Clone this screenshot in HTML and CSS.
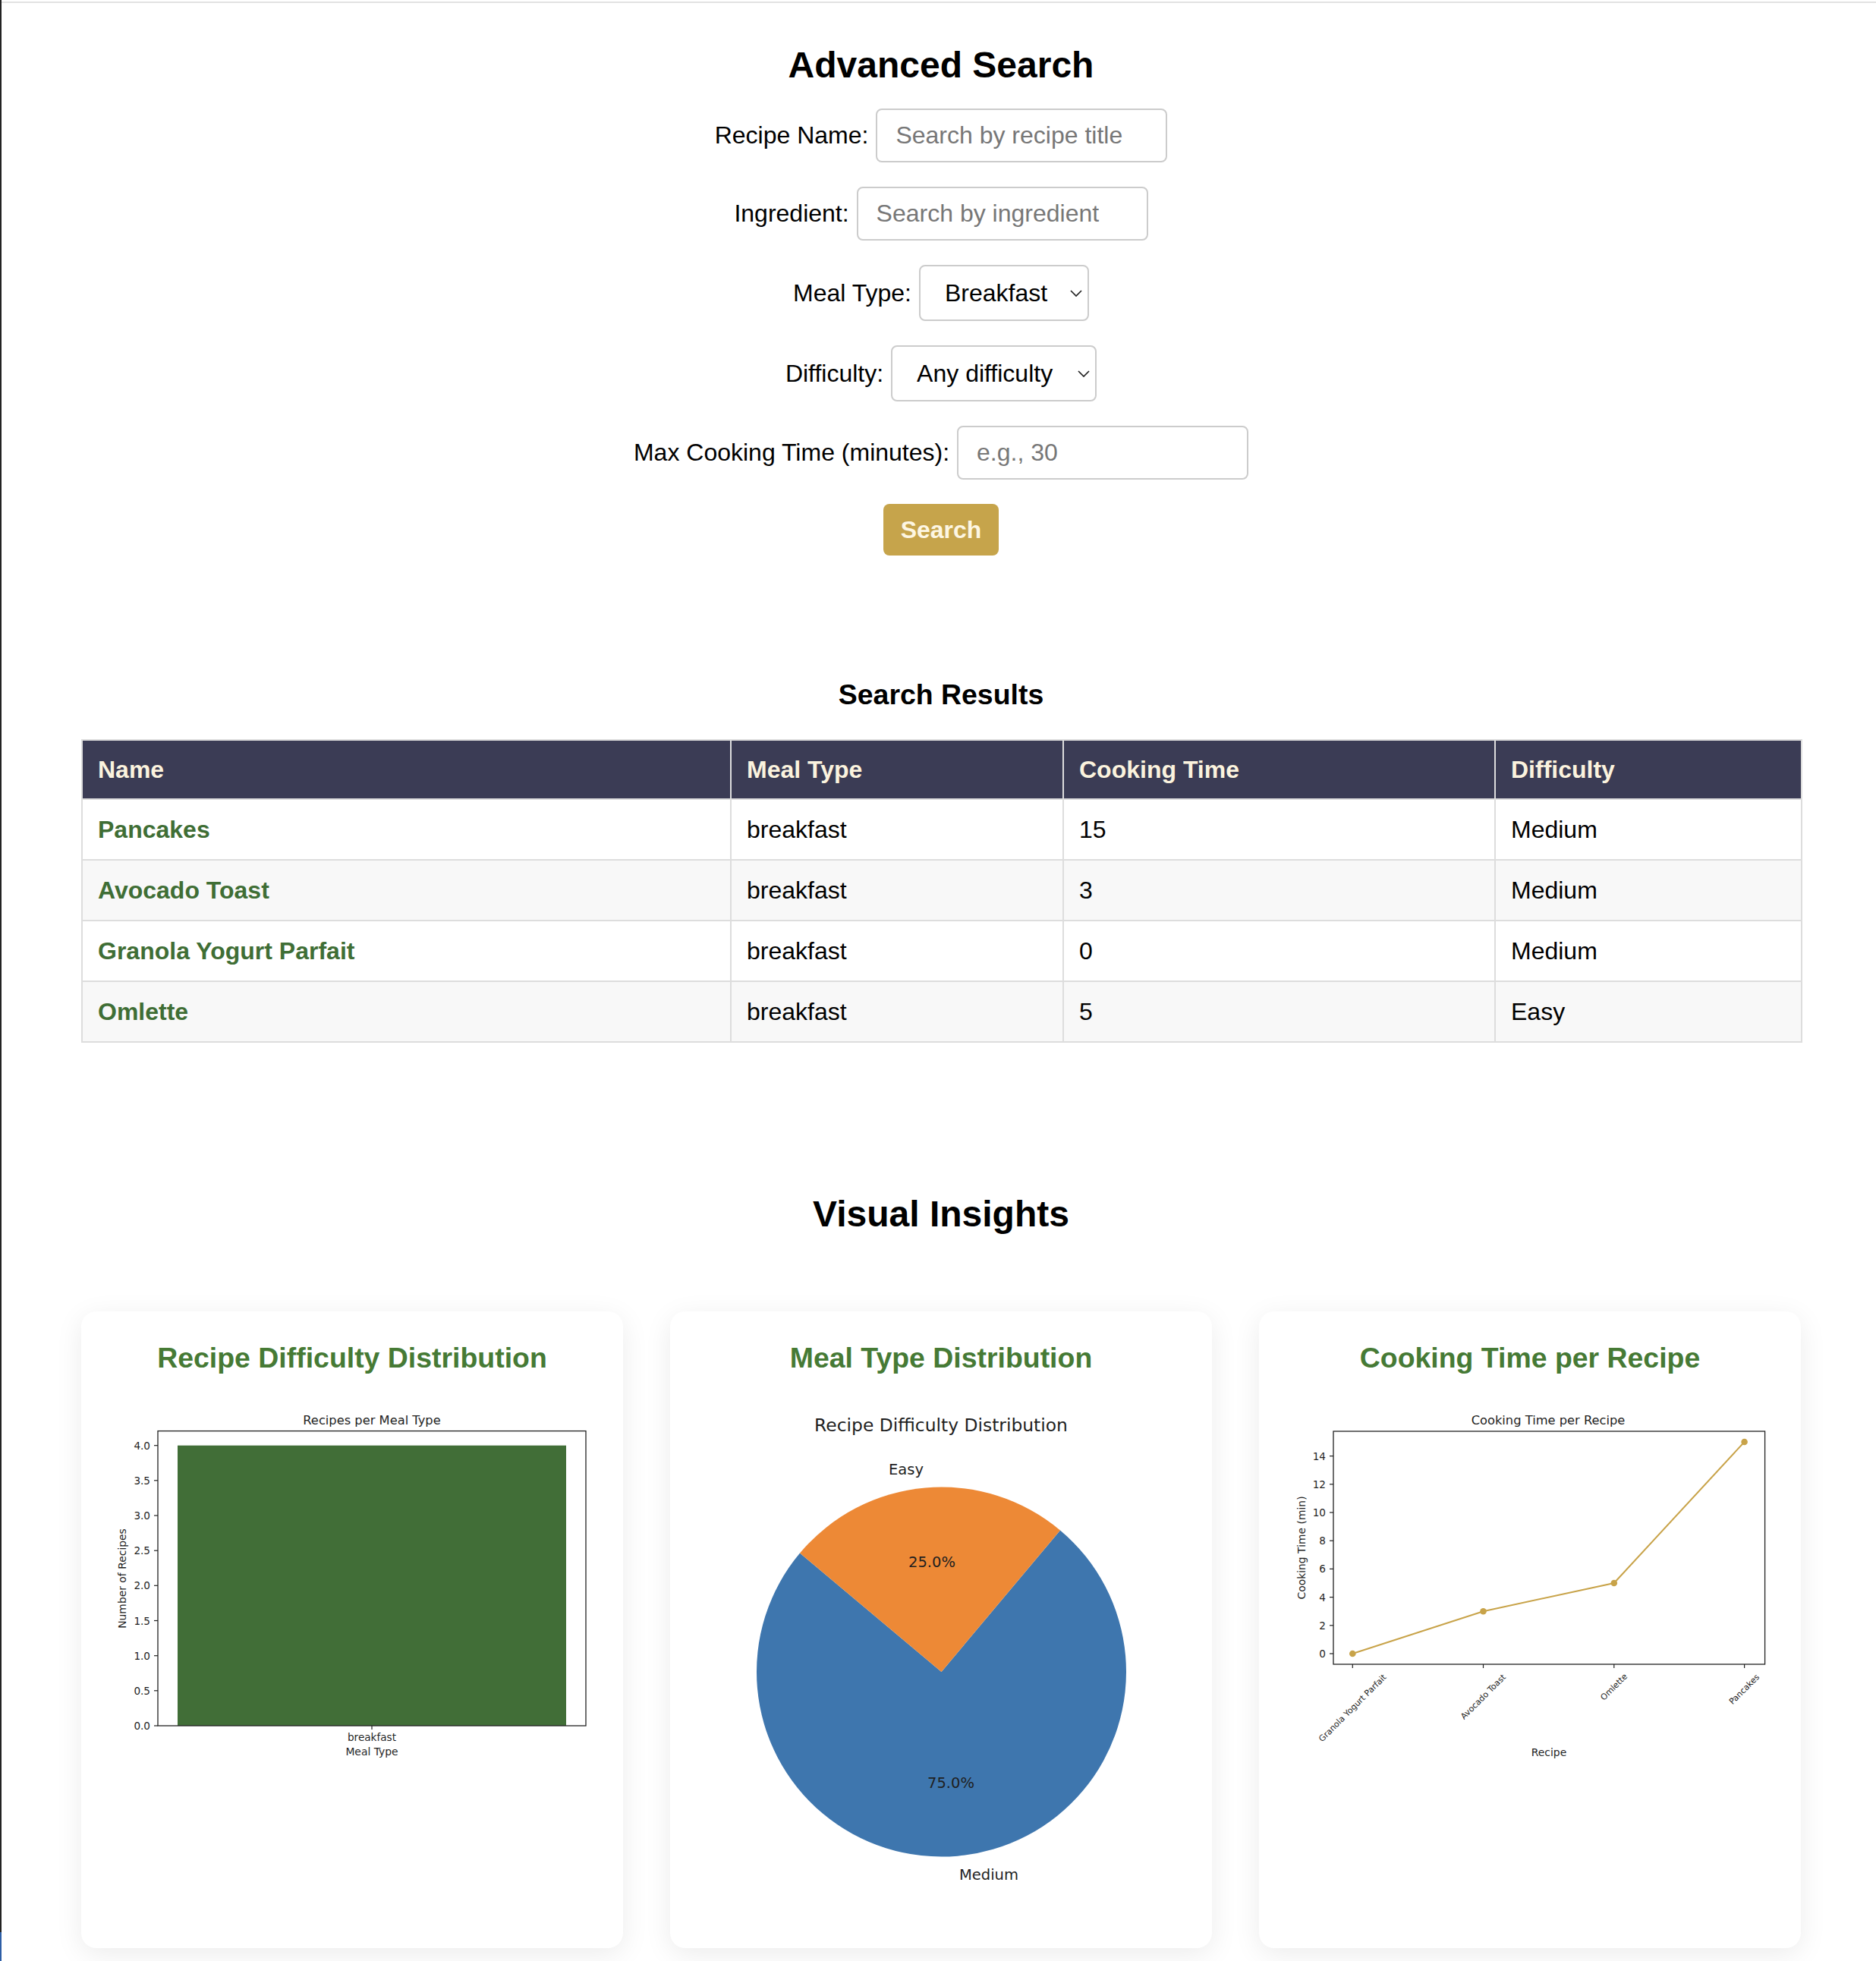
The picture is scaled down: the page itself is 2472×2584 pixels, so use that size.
FILE: index.html
```html
<!DOCTYPE html>
<html lang="en">
<head>
<meta charset="utf-8">
<title>Advanced Search</title>
<link rel="stylesheet" href="styles.css">
</head>
<body>
<div class="window">
  <div class="window-edge"></div>
  <div class="content">
    <main class="page">
      <section class="search">
        <h2 class="page-title">Advanced Search</h2>
        <form class="search-form">
          <div class="form-row">
            <label class="form-label" for="recipe-name">Recipe Name:</label>
            <input id="recipe-name" class="text-input" type="text" placeholder="Search by recipe title">
          </div>
          <div class="form-row">
            <label class="form-label" for="ingredient">Ingredient:</label>
            <input id="ingredient" class="text-input" type="text" placeholder="Search by ingredient">
          </div>
          <div class="form-row">
            <label class="form-label" for="meal-type">Meal Type:</label>
            <div class="select-wrap">
              <select id="meal-type" class="select select-meal">
                <option>Any</option>
                <option selected>Breakfast</option>
                <option>Lunch</option>
                <option>Dinner</option>
                <option>Snack</option>
              </select>
              <svg class="chevron" viewBox="0 0 16 9" width="16" height="9"><path d="M1 1 L8 8 L15 1" fill="none" stroke="#222" stroke-width="1.7"/></svg>
            </div>
          </div>
          <div class="form-row">
            <label class="form-label" for="difficulty">Difficulty:</label>
            <div class="select-wrap">
              <select id="difficulty" class="select select-difficulty">
                <option selected>Any difficulty</option>
                <option>Easy</option>
                <option>Medium</option>
                <option>Hard</option>
              </select>
              <svg class="chevron" viewBox="0 0 16 9" width="16" height="9"><path d="M1 1 L8 8 L15 1" fill="none" stroke="#222" stroke-width="1.7"/></svg>
            </div>
          </div>
          <div class="form-row">
            <label class="form-label" for="max-time">Max Cooking Time (minutes):</label>
            <input id="max-time" class="text-input" type="text" placeholder="e.g., 30">
          </div>
          <button class="search-btn" type="button">Search</button>
        </form>
      </section>

      <section class="results">
        <h3 class="results-title">Search Results</h3>
        <table class="results-table">
          <thead>
            <tr>
              <th class="col-name">Name</th>
              <th class="col-meal">Meal Type</th>
              <th class="col-time">Cooking Time</th>
              <th class="col-diff">Difficulty</th>
            </tr>
          </thead>
          <tbody>
            <tr><td><a class="recipe-link" href="#">Pancakes</a></td><td>breakfast</td><td>15</td><td>Medium</td></tr>
            <tr><td><a class="recipe-link" href="#">Avocado Toast</a></td><td>breakfast</td><td>3</td><td>Medium</td></tr>
            <tr><td><a class="recipe-link" href="#">Granola Yogurt Parfait</a></td><td>breakfast</td><td>0</td><td>Medium</td></tr>
            <tr><td><a class="recipe-link" href="#">Omlette</a></td><td>breakfast</td><td>5</td><td>Easy</td></tr>
          </tbody>
        </table>
      </section>

      <section class="insights">
        <h2 class="insights-title">Visual Insights</h2>
        <div class="chart-grid">
          <div class="chart-card">
            <h3 class="chart-title">Recipe Difficulty Distribution</h3>
            <svg class="chart" viewBox="0 0 634 480" width="634" height="480">
              <text class="c-title" x="343" y="20">Recipes per Meal Type</text>
              <rect x="87" y="53.7" width="512" height="369.3" fill="#416e37"/>
              <rect x="61" y="34.6" width="564" height="388.4" fill="none" stroke="#222" stroke-width="1.3"/>
              <g stroke="#222" stroke-width="1.2">
                <line x1="56" y1="423" x2="61" y2="423"/>
                <line x1="56" y1="376.8" x2="61" y2="376.8"/>
                <line x1="56" y1="330.7" x2="61" y2="330.7"/>
                <line x1="56" y1="284.5" x2="61" y2="284.5"/>
                <line x1="56" y1="238.3" x2="61" y2="238.3"/>
                <line x1="56" y1="192.2" x2="61" y2="192.2"/>
                <line x1="56" y1="146" x2="61" y2="146"/>
                <line x1="56" y1="99.8" x2="61" y2="99.8"/>
                <line x1="56" y1="53.7" x2="61" y2="53.7"/>
                <line x1="343" y1="423" x2="343" y2="428"/>
              </g>
              <g class="c-tick c-end">
                <text x="51" y="423">0.0</text>
                <text x="51" y="376.8">0.5</text>
                <text x="51" y="330.7">1.0</text>
                <text x="51" y="284.5">1.5</text>
                <text x="51" y="238.3">2.0</text>
                <text x="51" y="192.2">2.5</text>
                <text x="51" y="146">3.0</text>
                <text x="51" y="99.8">3.5</text>
                <text x="51" y="53.7">4.0</text>
              </g>
              <text class="c-tick" x="343" y="438">breakfast</text>
              <text class="c-label" x="343" y="457">Meal Type</text>
              <text class="c-label" transform="translate(13.5 229) rotate(-90)">Number of Recipes</text>
            </svg>
          </div>

          <div class="chart-card">
            <h3 class="chart-title">Meal Type Distribution</h3>
            <svg class="chart" viewBox="0 0 634 650" width="634" height="650">
              <text class="c-title c-title-lg" x="317" y="27">Recipe Difficulty Distribution</text>
              <path d="M317.5 352 L131 195.5 A243.5 243.5 0 1 0 474 165.5 Z" fill="#3e76ae"/>
              <path d="M317.5 352 L474 165.5 A243.5 243.5 0 0 0 131 195.5 Z" fill="#ed8936"/>
              <text class="c-pie c-end" x="294" y="85">Easy</text>
              <text class="c-pie c-start" x="341" y="619">Medium</text>
              <text class="c-pie" x="305" y="207">25.0%</text>
              <text class="c-pie" x="330" y="498">75.0%</text>
            </svg>
          </div>

          <div class="chart-card">
            <h3 class="chart-title">Cooking Time per Recipe</h3>
            <svg class="chart" viewBox="0 0 634 480" width="634" height="480">
              <text class="c-title" x="341" y="20">Cooking Time per Recipe</text>
              <rect x="58" y="35" width="568.6" height="307" fill="none" stroke="#222" stroke-width="1.3"/>
              <g stroke="#222" stroke-width="1.2">
                <line x1="53" y1="328" x2="58" y2="328"/>
                <line x1="53" y1="290.8" x2="58" y2="290.8"/>
                <line x1="53" y1="253.6" x2="58" y2="253.6"/>
                <line x1="53" y1="216.4" x2="58" y2="216.4"/>
                <line x1="53" y1="179.2" x2="58" y2="179.2"/>
                <line x1="53" y1="142" x2="58" y2="142"/>
                <line x1="53" y1="104.8" x2="58" y2="104.8"/>
                <line x1="53" y1="67.6" x2="58" y2="67.6"/>
                <line x1="83.3" y1="342" x2="83.3" y2="347"/>
                <line x1="255.5" y1="342" x2="255.5" y2="347"/>
                <line x1="427.8" y1="342" x2="427.8" y2="347"/>
                <line x1="599.6" y1="342" x2="599.6" y2="347"/>
              </g>
              <g class="c-tick c-end">
                <text x="48" y="328">0</text>
                <text x="48" y="290.8">2</text>
                <text x="48" y="253.6">4</text>
                <text x="48" y="216.4">6</text>
                <text x="48" y="179.2">8</text>
                <text x="48" y="142">10</text>
                <text x="48" y="104.8">12</text>
                <text x="48" y="67.6">14</text>
              </g>
              <polyline points="83.3,328 255.5,272.2 427.8,235 599.6,49" fill="none" stroke="#c8a349" stroke-width="2"/>
              <g fill="#c8a349">
                <circle cx="83.3" cy="328" r="4.3"/>
                <circle cx="255.5" cy="272.2" r="4.3"/>
                <circle cx="427.8" cy="235" r="4.3"/>
                <circle cx="599.6" cy="49" r="4.3"/>
              </g>
              <g class="c-rot">
                <text transform="translate(83.3 399.8) rotate(-45)">Granola Yogurt Parfait</text>
                <text transform="translate(255.5 385) rotate(-45)">Avocado Toast</text>
                <text transform="translate(427.8 372) rotate(-45)">Omlette</text>
                <text transform="translate(599.6 375) rotate(-45)">Pancakes</text>
              </g>
              <text class="c-label" x="342" y="457.5">Recipe</text>
              <text class="c-label" transform="translate(15.8 188.5) rotate(-90)">Cooking Time (min)</text>
            </svg>
          </div>
        </div>
      </section>
    </main>
  </div>
  <div class="window-corner"></div>
</div>
</body>
</html>
```

FILE: styles.css
```css
html, body {
  margin: 0;
  padding: 0;
  background: #ffffff;
}

body {
  font-family: "Liberation Sans", Arial, Helvetica, sans-serif;
  font-size: 32px;
  color: #000000;
}

.window {
  border-left: 2px solid #222222;
  padding-top: 2px;
  min-height: 2584px;
  box-sizing: border-box;
}

.window-edge {
  height: 2px;
  background: #e2e2e2;
}

.window-corner {
  position: fixed;
  left: 0;
  bottom: 0;
  width: 2px;
  height: 38px;
  background: #2d5ea6;
}

.content {
  padding-left: 6px;
}

.page {
  width: 2266px;
  margin: 0 auto;
}

/* ---------- search form ---------- */

.page-title {
  font-size: 48px;
  font-weight: bold;
  text-align: center;
  line-height: normal;
  margin: 54px 0 30px;
}

.search-form {
  margin: 0;
}

.form-row {
  display: flex;
  justify-content: center;
  align-items: center;
  gap: 10px;
  margin-bottom: 32px;
}

.form-label {
  font-size: 32px;
  line-height: normal;
}

.text-input {
  box-sizing: border-box;
  width: 384px;
  height: 71px;
  padding: 0 24px;
  border: 2px solid #cccccc;
  border-radius: 8px;
  font-family: inherit;
  font-size: 32px;
  color: #000000;
  background: #ffffff;
  outline: none;
}

.text-input::placeholder {
  color: #777777;
}

.select-wrap {
  position: relative;
  display: flex;
}

.select {
  appearance: none;
  -webkit-appearance: none;
  box-sizing: border-box;
  height: 74px;
  padding: 0 50px 0 32px;
  border: 2px solid #cccccc;
  border-radius: 8px;
  background: #ffffff;
  font-family: inherit;
  font-size: 32px;
  color: #000000;
  outline: none;
}

.select-meal {
  width: 224px;
}

.select-difficulty {
  width: 271px;
}

.chevron {
  position: absolute;
  right: 9px;
  top: 33px;
  pointer-events: none;
}

.search-btn {
  display: block;
  margin: 0 auto;
  width: 152px;
  height: 68px;
  padding: 0;
  border: none;
  border-radius: 8px;
  background: #c6a44b;
  color: #fdf6e2;
  font-family: inherit;
  font-size: 32px;
  font-weight: bold;
}

/* ---------- results ---------- */

.results-title {
  font-size: 37.44px;
  font-weight: bold;
  text-align: center;
  line-height: normal;
  margin: 162px 0 37px;
}

.results-table {
  width: 100%;
  border-collapse: collapse;
  table-layout: fixed;
  font-size: 32px;
}

.results-table th,
.results-table td {
  border: 2px solid #dddddd;
  padding: 20px;
  text-align: left;
}

.results-table th {
  background: #3b3c55;
  color: #fbf3de;
  font-weight: bold;
  line-height: 36px;
}

.results-table td {
  line-height: 38px;
}

.results-table tbody tr:nth-child(even) {
  background: #f8f8f8;
}

.col-name { width: 813px; }
.col-meal { width: 396px; }
.col-time { width: 527px; }
.col-diff { width: 362px; }

.recipe-link {
  color: #3f6e35;
  font-weight: bold;
  text-decoration: none;
}

/* ---------- insights ---------- */

.insights-title {
  font-size: 48px;
  font-weight: bold;
  text-align: center;
  line-height: normal;
  margin: 198px 0 101px;
}

.chart-grid {
  display: grid;
  grid-template-columns: repeat(3, 714px);
  gap: 62px;
}

.chart-card {
  box-sizing: border-box;
  min-height: 839px;
  padding: 40px;
  background: #ffffff;
  border-radius: 20px;
  box-shadow: 0 8px 36px rgba(0, 0, 0, 0.08);
  text-align: center;
}

.chart-title {
  margin: 0 0 40px;
  color: #467a35;
  font-size: 37.44px;
  font-weight: bold;
  line-height: normal;
}

.chart {
  display: block;
  overflow: visible;
}

.chart text {
  font-family: "DejaVu Sans", sans-serif;
  fill: #1f1f1f;
  text-anchor: middle;
  dominant-baseline: central;
}

.chart .c-title {
  font-size: 16.3px;
}

.chart .c-title-lg {
  font-size: 23.4px;
}

.chart .c-tick text,
.chart text.c-tick {
  font-size: 13.6px;
}

.chart .c-label {
  font-size: 13.9px;
}

.chart .c-end text,
.chart text.c-end {
  text-anchor: end;
}

.chart text.c-start {
  text-anchor: start;
}

.chart .c-pie {
  font-size: 19.5px;
}

.chart .c-rot text {
  font-size: 11px;
}
```
